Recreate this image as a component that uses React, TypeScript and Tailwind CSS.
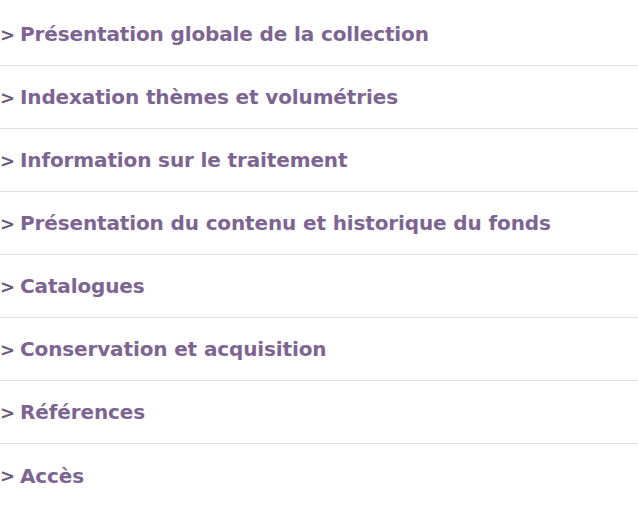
import React from "react";

const items = [
  "Présentation globale de la collection",
  "Indexation thèmes et volumétries",
  "Information sur le traitement",
  "Présentation du contenu et historique du fonds",
  "Catalogues",
  "Conservation et acquisition",
  "Références",
  "Accès",
];

export default function App() {
  return (
    <div className="w-[638px] h-[505px] bg-white pt-[3px]" style={{ fontFamily: '"DejaVu Sans", Verdana, sans-serif' }}>
      {items.map((t, i) => (
        <div
          key={i}
          className={`h-[63px] flex items-center ${i < items.length - 1 ? "border-b border-[#e0e0e0]" : ""}`}
        >
          <span className="text-[18px] font-bold text-[#6a5a7c] w-[20px]">&gt;</span>
          <span className="text-[20px] font-bold tracking-[-0.13px] text-[#7d6591]">{t}</span>
        </div>
      ))}
    </div>
  );
}
